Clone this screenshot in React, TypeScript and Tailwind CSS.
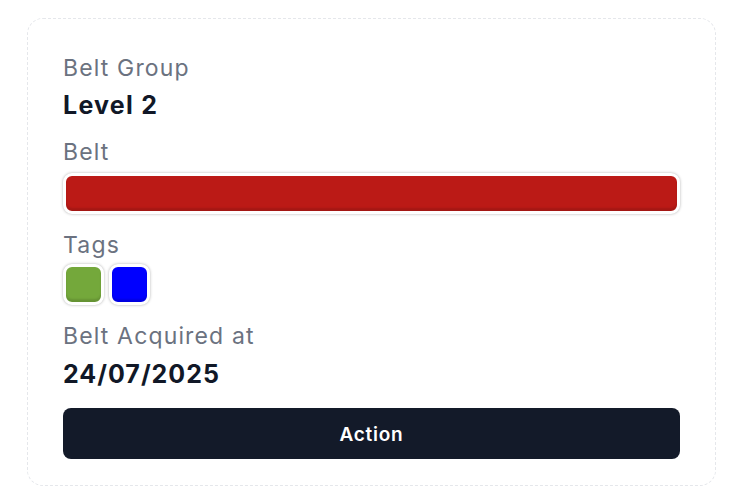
import React from 'react';

const tags = ['#74a83b', '#0000ff'];

const App: React.FC = () => {
  return (
    <div className="min-h-screen bg-white pl-[27px] pt-[18px]" style={{ fontFamily: 'Inter, "Open Sans", sans-serif' }}>
      <div className="w-[689px] h-[468px] rounded-2xl border border-dashed border-[#e5e7eb] px-[35px] pt-[35px]">
        <div className="text-[23px] leading-[28px] tracking-[0.05em] text-[#6b7280]">Belt Group</div>
        <div className="mt-[8px] text-[25px] leading-[30px] tracking-[0.05em] font-bold text-[#111827]">Level 2</div>

        <div className="mt-[18px] text-[23px] leading-[28px] tracking-[0.05em] text-[#6b7280]">Belt</div>
        <div className="mt-[7px] h-[41px] rounded-[9px] border-[3px] border-white bg-[#bb1a16] shadow-[0_0_3px_rgba(0,0,0,0.3),inset_0_-3px_2px_rgba(0,0,0,0.12)]" />

        <div className="mt-[17px] text-[23px] leading-[28px] tracking-[0.05em] text-[#6b7280]">Tags</div>
        <div className="mt-[5px] flex gap-[5px]">
          {tags.map((c) => (
            <div
              key={c}
              className="h-[41px] w-[41px] rounded-[9px] border-[3px] border-white shadow-[0_0_3px_rgba(0,0,0,0.3),inset_0_-3px_2px_rgba(0,0,0,0.12)]"
              style={{ backgroundColor: c }}
            />
          ))}
        </div>

        <div className="mt-[17px] text-[23px] leading-[28px] tracking-[0.05em] text-[#6b7280]">Belt Acquired at</div>
        <div className="mt-[9px] text-[25px] leading-[30px] tracking-[0.04em] font-bold text-[#111827]">24/07/2025</div>

        <button className="mt-[19px] h-[51px] w-full rounded-lg bg-[#131a29] pt-[3px] text-[19px] tracking-[0.04em] font-semibold text-white">
          Action
        </button>
      </div>
    </div>
  );
};

export default App;
